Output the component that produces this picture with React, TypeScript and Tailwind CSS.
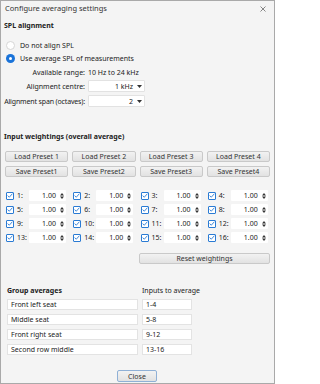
import React from 'react';

const font = { fontFamily: '"Noto Sans", "Open Sans", sans-serif' };

function Radio({ checked, label }: { checked?: boolean; label: string }) {
  return (
    <div className="flex h-[10px] items-center gap-[5px] pl-[2px]">
      {checked ? (
        <span className="flex h-[9px] w-[9px] items-center justify-center rounded-full bg-[#1a73d9]">
          <span className="h-[3px] w-[3px] rounded-full bg-white" />
        </span>
      ) : (
        <span className="h-[9px] w-[9px] rounded-full border border-[#d6d6d6] bg-white" />
      )}
      <span>{label}</span>
    </div>
  );
}

function Combo({ value }: { value: string }) {
  return (
    <div className="flex h-[12px] w-[57px] items-center justify-end gap-[4px] rounded-[1px] border border-[#e2e2e2] bg-white pr-[2px]">
      <span>{value}</span>
      <svg width="5" height="3" viewBox="0 0 5 3">
        <path d="M0 0h5L2.5 3z" fill="#333" />
      </svg>
    </div>
  );
}

function Btn({ label, className = '' }: { label: string; className?: string }) {
  return (
    <div
      className={`flex h-[11px] items-center justify-center rounded-[2px] border border-[#c9c9c9] bg-gradient-to-b from-[#f2f2f2] to-[#e2e2e2] text-[#333] ${className}`}
    >
      {label}
    </div>
  );
}

function Cell({ n }: { n: number }) {
  return (
    <div className="flex h-[11px] items-center">
      <span className="ml-[1px] flex h-[8px] w-[8px] items-center justify-center rounded-[1px] border border-[#2a7bd4] bg-white">
        <svg width="6" height="5" viewBox="0 0 6 5">
          <path d="M0.6 2.6 2.3 4.2 5.4 0.7" fill="none" stroke="#2a7bd4" strokeWidth="0.9" />
        </svg>
      </span>
      <span className="ml-[3px] w-[12px]">{n}:</span>
      <div className="flex h-[11px] w-[37px] items-center justify-end rounded-[1px] bg-white pr-[2px]">
        <span>1.00</span>
        <svg className="ml-[4px]" width="4" height="6" viewBox="0 0 4 6">
          <path d="M0 2.5h4L2 0zM0 3.5h4L2 6z" fill="#333" />
        </svg>
      </div>
    </div>
  );
}

function Field({ text, className = '' }: { text: string; className?: string }) {
  return (
    <div className={`flex h-[11px] items-center border border-[#e3e3e3] bg-white pl-[3px] ${className}`}>
      {text}
    </div>
  );
}

export default function App() {
  const groups = [
    ['Front left seat', '1-4'],
    ['Middle seat', '5-8'],
    ['Front right seat', '9-12'],
    ['Second row middle', '13-16'],
  ];
  return (
    <div
      style={font}
      className="flex h-[384px] w-[275px] flex-col border border-[#a9a9a9] bg-[#f4f4f4] text-[7px] leading-none text-[#222]"
    >
      {/* title bar */}
      <div className="flex h-[16px] shrink-0 items-center justify-between pl-[4px] pr-[8px] text-[7.5px] text-[#333]">
        <span>Configure averaging settings</span>
        <svg width="6" height="6" viewBox="0 0 6 6">
          <path d="M0.5 0.5l5 5M5.5 0.5l-5 5" stroke="#555" strokeWidth="0.7" />
        </svg>
      </div>

      <div className="flex flex-col px-[3px]">
        <div className="mt-[3px] flex h-[10px] items-center font-bold">SPL alignment</div>
        <div className="mt-[10px] flex flex-col gap-[3px]">
          <Radio label="Do not align SPL" />
          <Radio checked label="Use average SPL of measurements" />
        </div>

        <div className="mt-[4px] grid grid-cols-[81px_auto] items-center gap-x-[3px] gap-y-[3px]">
          <span className="flex h-[10px] items-center justify-end">Available range:</span>
          <span>10 Hz to 24 kHz</span>
          <span className="justify-self-end">Alignment centre:</span>
          <Combo value="1 kHz" />
          <span className="justify-self-end whitespace-nowrap tracking-[-0.15px]">Alignment span (octaves):</span>
          <Combo value="2" />
        </div>

        <div className="mt-[24px] flex h-[10px] items-center font-bold">Input weightings (overall average)</div>

        <div className="mt-[10px] grid grid-cols-4 gap-x-[4px] gap-y-[4px] pl-[1px] pr-[1px]">
          {[1, 2, 3, 4].map((i) => (
            <Btn key={`l${i}`} label={`Load Preset ${i}`} />
          ))}
          {[1, 2, 3, 4].map((i) => (
            <Btn key={`s${i}`} label={`Save Preset${i}`} />
          ))}
        </div>

        <div className="mt-[13px] grid grid-cols-4 gap-x-[4px] gap-y-[3px] pl-[1px] pr-[1px]">
          {Array.from({ length: 16 }, (_, i) => (
            <Cell key={i} n={i + 1} />
          ))}
        </div>

        <div className="mt-[10px] flex justify-end pr-[1px]">
          <Btn label="Reset weightings" className="w-[131px]" />
        </div>

        <div className="mt-[21px] grid grid-cols-[131px_50px] gap-x-[4px] gap-y-[4px] pl-[3px]">
          <span className="flex h-[10px] items-center font-bold">Group averages</span>
          <span className="flex h-[10px] items-center whitespace-nowrap">Inputs to average</span>
          {groups.map(([a, b]) => (
            <React.Fragment key={a}>
              <Field text={a} />
              <Field text={b} />
            </React.Fragment>
          ))}
        </div>

        <div className="mt-[15px] flex justify-center pr-[1px]">
          <div className="flex h-[12px] w-[40px] items-center justify-center rounded-[2px] border border-[#8fb0d6] bg-gradient-to-b from-[#f2f2f2] to-[#e2e2e2] text-[#333]">
            Close
          </div>
        </div>
      </div>
    </div>
  );
}
